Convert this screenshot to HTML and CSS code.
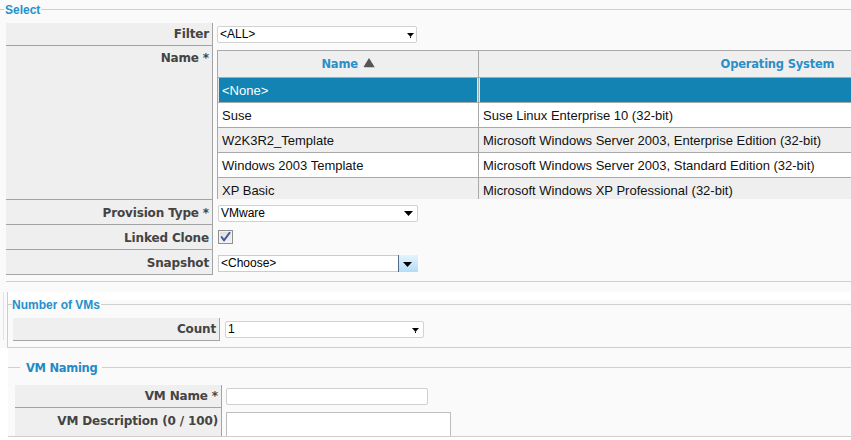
FILE: index.html
```html
<!DOCTYPE html>
<html>
<head>
<meta charset="utf-8">
<title>Provision VM</title>
<link rel="stylesheet" href="styles.css">
</head>
<body>
<div class="upper">
  <div class="legend legend-select"><span class="lg-lead"></span><span class="lg-text">Select</span><span class="lg-line"></span></div>
  <div class="form form-select">
    <div class="row">
      <div class="lbl h23">Filter</div>
      <div class="fld fld-filter">
        <div class="dd dd-filter"><span class="dd-text">&lt;ALL&gt;</span><svg class="arr arr-s" width="7" height="5" viewBox="0 0 7 5"><polygon points="0,0 7,0 3.5,4" fill="#000"/><rect x="3" y="4" width="1" height="1" fill="#000"/></svg></div>
      </div>
    </div>
    <div class="row">
      <div class="lbl h154">Name *</div>
      <div class="fld fld-name">
        <div class="grid-view">
          <div class="grid">
            <div class="gr gh">
              <div class="gc c1 hc">Name <svg class="sort" width="12" height="10" viewBox="0 0 12 10"><polygon points="6,0.5 11.5,9.5 0.5,9.5" fill="#c8c8c8" transform="translate(0.6,0.4)"/><polygon points="6,0 11.5,9 0.5,9" fill="#555"/></svg></div>
              <div class="gc c2 hc">Operating System</div>
            </div>
            <div class="gr sel">
              <div class="gc c1">&lt;None&gt;</div>
              <div class="gc c2"></div>
            </div>
            <div class="gr">
              <div class="gc c1">Suse</div>
              <div class="gc c2">Suse Linux Enterprise 10 (32-bit)</div>
            </div>
            <div class="gr alt">
              <div class="gc c1">W2K3R2_Template</div>
              <div class="gc c2">Microsoft Windows Server 2003, Enterprise Edition (32-bit)</div>
            </div>
            <div class="gr">
              <div class="gc c1">Windows 2003 Template</div>
              <div class="gc c2">Microsoft Windows Server 2003, Standard Edition (32-bit)</div>
            </div>
            <div class="gr alt">
              <div class="gc c1">XP Basic</div>
              <div class="gc c2">Microsoft Windows XP Professional (32-bit)</div>
            </div>
          </div>
        </div>
      </div>
    </div>
    <div class="row">
      <div class="lbl h25">Provision Type *</div>
      <div class="fld fld-std">
        <div class="dd dd-prov"><span class="dd-text">VMware</span><svg class="arr arr-l" width="9" height="5" viewBox="0 0 9 5"><polygon points="0,0 9,0 4.5,5" fill="#000"/></svg></div>
      </div>
    </div>
    <div class="row">
      <div class="lbl h25">Linked Clone</div>
      <div class="fld fld-std">
        <div class="cb"><svg width="13" height="12" viewBox="0 0 13 12"><path d="M2.6 6 L5 9.4 L10.6 1.8" fill="none" stroke="#3f56a3" stroke-width="1.9" stroke-linecap="round" stroke-linejoin="round"/></svg></div>
      </div>
    </div>
    <div class="row">
      <div class="lbl h25">Snapshot</div>
      <div class="fld fld-std">
        <div class="combo"><span class="combo-in">&lt;Choose&gt;</span><span class="combo-btn"><svg width="9" height="5" viewBox="0 0 9 5"><polygon points="0,0 9,0 4.5,5" fill="#000"/></svg></span></div>
      </div>
    </div>
  </div>
  <div class="sec-end"></div>
</div>
<div class="lower">
  <div class="vms-wrap">
    <div class="gutter"></div>
    <div class="vms">
      <div class="legend legend-vms"><span class="lg-lead"></span><span class="lg-text">Number of VMs</span><span class="lg-line"></span></div>
      <div class="row row-count">
        <div class="lbl h23">Count</div>
        <div class="fld fld-count">
          <div class="dd dd-count"><span class="dd-text">1</span><svg class="arr arr-c" width="7" height="5" viewBox="0 0 7 5"><polygon points="0,0 7,0 3.5,4" fill="#000"/><rect x="3" y="4" width="1" height="1" fill="#000"/></svg></div>
        </div>
      </div>
    </div>
  </div>
  <div class="naming-wrap">
    <div class="naming">
      <div class="legend legend-naming"><span class="lg-lead"></span><span class="lg-text">VM Naming</span><span class="lg-line"></span></div>
      <div class="form form-naming">
        <div class="row">
          <div class="lbl h23">VM Name *</div>
          <div class="fld fld-in"><div class="inp"></div></div>
        </div>
        <div class="row">
          <div class="lbl h28 nob">VM Description (0 / 100)</div>
          <div class="fld fld-ta"><div class="ta"></div></div>
        </div>
      </div>
    </div>
  </div>
</div>
</body>
</html>
```

FILE: styles.css
```css
html, body {
  margin: 0;
  padding: 0;
  background: #ffffff;
}
body {
  width: 851px;
  height: 440px;
  overflow: hidden;
  font-family: "Liberation Sans", Arial, sans-serif;
  font-size: 12px;
  color: #111111;
}

/* ---------- legends (fieldset-like headers) ---------- */
.legend {
  display: flex;
  align-items: flex-start;
  height: 14px;
}
.lg-lead, .lg-line {
  border-top: 1px solid #cfcfcf;
  margin-top: 6px;
  height: 0;
}
.lg-lead { flex: none; width: 4px; }
.lg-line { flex: 1; }
.lg-text {
  flex: none;
  font-weight: bold;
  color: #2590cb;
  line-height: 14px;
  white-space: nowrap;
}
.legend-select .lg-text { padding: 0 1px; font-size: 12px; }
.legend-vms .lg-text { padding: 0 1px 0 0; font-size: 12px; }
.legend-naming .lg-lead { width: 12px; }
.legend-naming .lg-text {
  font-family: "DejaVu Sans", sans-serif;
  font-size: 11.5px;
  letter-spacing: -0.3px;
  padding: 0 5px 0 6px;
  color: #1f8ac6;
}

/* ---------- form rows ---------- */
.upper {
  background: #fafafa;
  padding-top: 3px;
  padding-bottom: 10px;
}
.form-select { margin: 6px 0 0 6px; }
.row { display: flex; }
.lbl {
  flex: none;
  box-sizing: border-box;
  width: 207px;
  background: #efefef;
  border-right: 1px solid #a3a3a3;
  border-bottom: 1px solid #a3a3a3;
  text-align: right;
  padding-right: 3px;
  font-family: "DejaVu Sans", sans-serif;
  font-weight: bold;
  font-size: 12px;
  letter-spacing: -0.15px;
  color: #444444;
  line-height: 21px;
  white-space: nowrap;
}
.h23 { height: 23px; padding-top: 1px; }
.h25 { height: 25px; padding-top: 3px; }
.h28 { height: 28px; padding-top: 3px; }
.h154 { height: 154px; padding-top: 2px; }
.nob { border-bottom: none; }
.fld { flex: 1; min-width: 0; box-sizing: border-box; }
.fld-filter { padding: 3px 0 0 4px; }
.fld-name { padding: 4px 0 0 4px; }
.fld-std { padding: 5px 0 0 5px; }
.fld-count { padding: 3px 0 0 5px; }
.fld-in { padding: 3px 0 0 4px; }
.fld-ta { padding: 4px 0 0 4px; }

.sec-end {
  margin: 6px 0 0 6px;
  border-top: 1px solid #cfcfcf;
}

/* ---------- dropdowns ---------- */
.dd {
  box-sizing: border-box;
  display: flex;
  align-items: center;
  height: 17px;
  background: #ffffff;
  border: 1px solid #d2d2d2;
  border-radius: 2px;
  padding-left: 2px;
  line-height: 15px;
  color: #000000;
}
.dd-filter { width: 200px; }
.dd-prov { width: 200px; }
.dd-count { width: 199px; }
.dd-text { flex: 1; }
.arr { flex: none; display: block; }
.arr-s { margin-right: 2px; margin-top: 1px; }
.arr-l { margin-right: 4px; }
.arr-c { margin-right: 4px; margin-top: 1px; }

/* ---------- combo ---------- */
.combo {
  display: flex;
  width: 200px;
  height: 17px;
}
.combo-in {
  box-sizing: border-box;
  width: 180px;
  height: 17px;
  background: #ffffff;
  border: 1px solid #cccccc;
  border-right: none;
  padding-left: 2px;
  line-height: 15px;
  color: #000000;
}
.combo-btn {
  box-sizing: border-box;
  width: 20px;
  height: 17px;
  border-left: 1px solid #4f6d8a;
  background: linear-gradient(#e4f3fd, #b4dcf5);
  display: flex;
  align-items: center;
  justify-content: center;
  padding-right: 2px;
}
.combo-btn svg { display: block; margin-top: 1px; }

/* ---------- checkbox ---------- */
.cb {
  box-sizing: border-box;
  width: 15px;
  height: 14px;
  border: 1px solid #8e8f8f;
  background: linear-gradient(#dedede, #f5f5f5);
  box-shadow: inset 0 0 0 1px #f2f2f2;
}
.cb svg { display: block; }

/* ---------- grid ---------- */
.grid-view {
  height: 149px;
  overflow: hidden;
}
.grid {
  width: 860px;
  border-left: 1px solid #a9a9a9;
  border-top: 1px solid #a9a9a9;
  background: #ffffff;
}
.gr { display: flex; }
.gc {
  flex: none;
  box-sizing: border-box;
  height: 25px;
  border-right: 1px solid #a9a9a9;
  border-bottom: 1px solid #a9a9a9;
  padding: 1px 0 0 4px;
  font-size: 13px;
  line-height: 23px;
  white-space: nowrap;
  overflow: hidden;
  color: #111111;
}
.c1 { width: 261px; }
.c2 { width: 598px; }
.gh .gc {
  height: 27px;
  background: #efefef;
  padding: 0;
  line-height: 26px;
  text-align: center;
  font-family: "DejaVu Sans", sans-serif;
  font-weight: bold;
  font-size: 11.5px;
  letter-spacing: -0.2px;
  color: #2a8fc7;
}
.sort { vertical-align: 0px; margin-left: 1px; }
.alt .gc { background: #efefef; }
.sel .gc {
  background: #1283b3;
  color: #ffffff;
  box-shadow: inset 1px 0 0 #e4e4e4, inset -1px 0 0 #e4e4e4;
}

/* ---------- lower sections ---------- */
.vms-wrap {
  display: flex;
  background: #fafafa;
}
.gutter {
  flex: none;
  width: 3px;
  margin-left: 3px;
  margin-bottom: 8px;
  border-left: 1px solid #e3e3e3;
}
.vms {
  flex: 1;
  border-left: 1px solid #cdcdcd;
  border-bottom: 1px solid #cdcdcd;
  background: linear-gradient(#ffffff 0, #ffffff 8px, #fafafa 8px);
  padding: 6px 0 6px 0;
}
.row-count { margin: 6px 0 0 5px; }

.naming-wrap {
  padding-left: 8px;
  background: #ffffff;
}
.naming {
  background: #fafafa;
  padding-top: 13px;
  border-bottom: 1px solid #cdcdcd;
}
.form-naming { margin: 10px 0 0 7px; }
.inp {
  box-sizing: border-box;
  width: 202px;
  height: 17px;
  background: #ffffff;
  border: 1px solid #cfcfcf;
  border-radius: 2px;
}
.ta {
  box-sizing: border-box;
  width: 225px;
  height: 24px;
  background: #ffffff;
  border: 1px solid #bdbdbd;
  border-bottom: none;
}
```
